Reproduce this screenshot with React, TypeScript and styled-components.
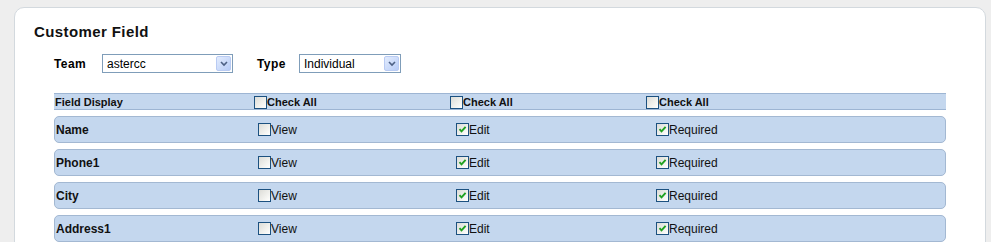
import { FC } from "react";
import styled, { createGlobalStyle } from "styled-components";

const GlobalStyle = createGlobalStyle`
  html, body {
    margin: 0;
    padding: 0;
    background: #eeeeee;
    font-family: "Liberation Sans", Arial, sans-serif;
    color: #000;
    overflow: hidden;
  }
`;

interface Field {
  name: string;
  view: boolean;
  edit: boolean;
  required: boolean;
}

const fields: Field[] = [
  { name: "Name", view: false, edit: true, required: true },
  { name: "Phone1", view: false, edit: true, required: true },
  { name: "City", view: false, edit: true, required: true },
  { name: "Address1", view: false, edit: true, required: true },
];

const CheckBox: FC<{ checked?: boolean }> = ({ checked }) => (
  <Box>
    {checked && (
      <svg width="9" height="9" viewBox="0 0 9 9">
        <path
          d="M1.5 4.2 L3.5 6.3 L7.6 1.8"
          fill="none"
          stroke="#21a121"
          strokeWidth="1.9"
        />
      </svg>
    )}
  </Box>
);

const SelectBox: FC<{ value: string; width: number }> = ({ value, width }) => (
  <Select $width={width}>
    <SelectValue>{value}</SelectValue>
    <SelectButton>
      <svg width="8" height="6" viewBox="0 0 8 6">
        <path d="M1 1 L4 4 L7 1" fill="none" stroke="#4d6185" strokeWidth="1.6" />
      </svg>
    </SelectButton>
  </Select>
);

const App: FC = () => {
  return (
    <>
      <GlobalStyle />
      <Card>
        <Title>Customer Field</Title>
        <Filters>
          <FilterLabel $width={48}>Team</FilterLabel>
          <SelectBox value="astercc" width={131} />
          <FilterLabel $width={42} $gap={24}>
            Type
          </FilterLabel>
          <SelectBox value="Individual" width={102} />
        </Filters>
        <Table>
          <HeaderRow>
            <HeaderCell>Field Display</HeaderCell>
            <HeaderCell>
              <CheckBox />
              Check All
            </HeaderCell>
            <HeaderCell>
              <CheckBox />
              Check All
            </HeaderCell>
            <HeaderCell>
              <CheckBox />
              Check All
            </HeaderCell>
          </HeaderRow>
          {fields.map((f) => (
            <FieldRow key={f.name}>
              <NameCell>{f.name}</NameCell>
              <OptionCell>
                <CheckBox checked={f.view} />
                View
              </OptionCell>
              <OptionCell>
                <CheckBox checked={f.edit} />
                Edit
              </OptionCell>
              <OptionCell>
                <CheckBox checked={f.required} />
                Required
              </OptionCell>
            </FieldRow>
          ))}
        </Table>
      </Card>
    </>
  );
};

export default App;

const Card = styled.div`
  margin: 7px 5px 0 14px;
  min-height: 300px;
  background: #fff;
  border: 1px solid #d3d9de;
  border-radius: 10px;
  padding: 15px 19px;
  box-sizing: border-box;
`;

const Title = styled.h2`
  margin: 0;
  font-size: 15px;
  line-height: 18px;
  font-weight: bold;
  letter-spacing: 0.4px;
  color: #111;
`;

const Filters = styled.div`
  display: flex;
  align-items: center;
  height: 19px;
  margin: 13px 0 0 20px;
`;

const FilterLabel = styled.span<{ $width: number; $gap?: number }>`
  width: ${(p) => p.$width}px;
  margin-left: ${(p) => p.$gap || 0}px;
  flex-shrink: 0;
  font-size: 12px;
  font-weight: bold;
  letter-spacing: 0.4px;
`;

const Select = styled.div<{ $width: number }>`
  display: flex;
  align-items: center;
  width: ${(p) => p.$width}px;
  height: 19px;
  box-sizing: border-box;
  border: 1px solid #7f9db9;
  background: #fff;
  padding: 1px;
`;

const SelectValue = styled.span`
  flex: 1;
  font-size: 12px;
  padding-left: 3px;
`;

const SelectButton = styled.span`
  display: flex;
  align-items: center;
  justify-content: center;
  width: 15px;
  height: 15px;
  box-sizing: border-box;
  border: 1px solid #b9cbf3;
  border-radius: 2px;
  background: linear-gradient(135deg, #e3ecfd, #b8cdf8);
`;

const Table = styled.div`
  margin: 20px 0 0 20px;
  width: 892px;
`;

const HeaderRow = styled.div`
  display: grid;
  grid-template-columns: 200px 196px 196px 1fr;
  align-items: center;
  height: 17px;
  box-sizing: border-box;
  background: #c4d7ee;
  border-top: 1px solid #9db5d3;
  border-bottom: 1px solid #9db5d3;
`;

const HeaderCell = styled.div`
  display: flex;
  align-items: center;
  font-size: 11px;
  font-weight: bold;
  color: #111;
  padding-left: 1px;
  &:not(:first-child) {
    padding-left: 0;
    padding-top: 1px;
  }
`;

const FieldRow = styled.div`
  display: grid;
  grid-template-columns: 203px 198px 200px 1fr;
  align-items: center;
  height: 27px;
  margin-top: 6px;
  box-sizing: border-box;
  background: #c4d7ee;
  border: 1px solid #a3b8d2;
  border-radius: 5px;
`;

const NameCell = styled.div`
  font-size: 12px;
  font-weight: bold;
  color: #111;
  padding-left: 1px;
  padding-top: 1px;
`;

const OptionCell = styled.div`
  display: flex;
  align-items: center;
  font-size: 12px;
  color: #111;
`;

const Box = styled.span`
  display: inline-flex;
  align-items: center;
  justify-content: center;
  width: 13px;
  height: 13px;
  box-sizing: border-box;
  border: 1px solid #1c5180;
  background: linear-gradient(135deg, #dcdcd7 0%, #f5f5f2 70%, #fff 100%);
`;
